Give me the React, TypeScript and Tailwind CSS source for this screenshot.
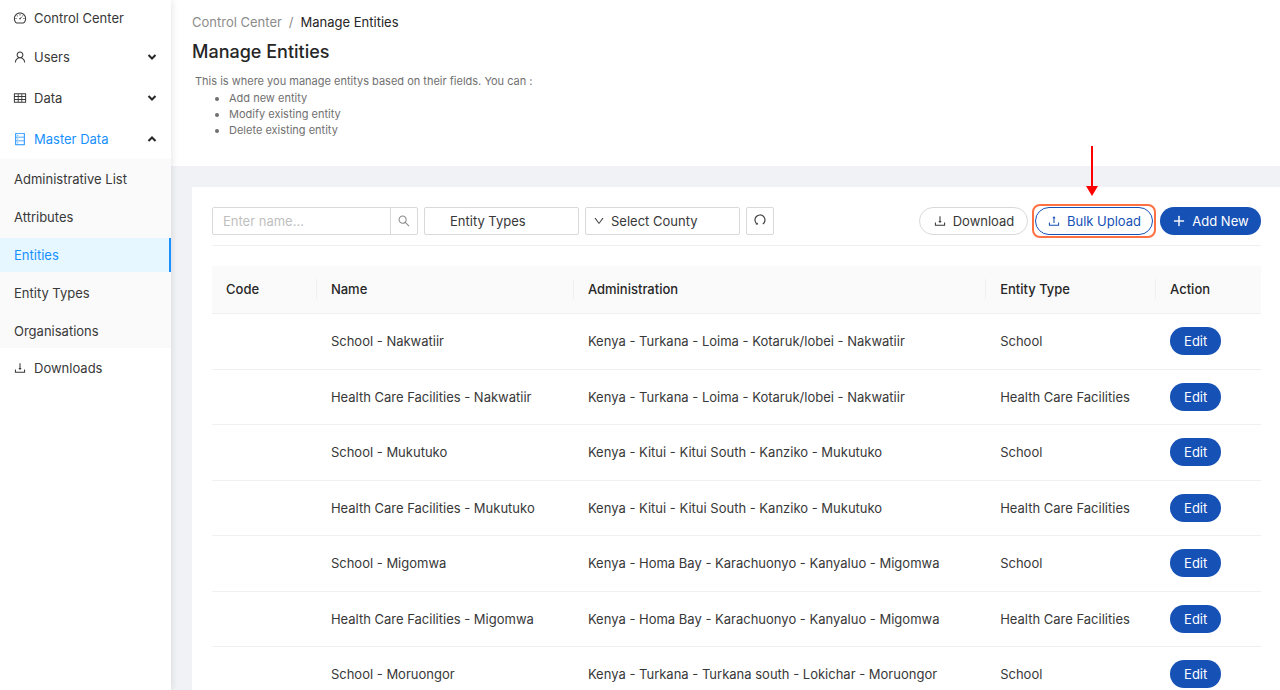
import React from "react";
import {
  AiOutlineDashboard,
  AiOutlineDatabase,
  AiOutlineDown,
  AiOutlineDownload,
  AiOutlinePlus,
  AiOutlineSearch,
  AiOutlineTable,
  AiOutlineUpload,
  AiOutlineUser,
} from "react-icons/ai";

const subItems = [
  "Administrative List",
  "Attributes",
  "Entities",
  "Entity Types",
  "Organisations",
];

const rows = [
  { name: "School - Nakwatiir", administration: "Kenya - Turkana - Loima - Kotaruk/lobei - Nakwatiir", type: "School" },
  { name: "Health Care Facilities - Nakwatiir", administration: "Kenya - Turkana - Loima - Kotaruk/lobei - Nakwatiir", type: "Health Care Facilities" },
  { name: "School - Mukutuko", administration: "Kenya - Kitui - Kitui South - Kanziko - Mukutuko", type: "School" },
  { name: "Health Care Facilities - Mukutuko", administration: "Kenya - Kitui - Kitui South - Kanziko - Mukutuko", type: "Health Care Facilities" },
  { name: "School - Migomwa", administration: "Kenya - Homa Bay - Karachuonyo - Kanyaluo - Migomwa", type: "School" },
  { name: "Health Care Facilities - Migomwa", administration: "Kenya - Homa Bay - Karachuonyo - Kanyaluo - Migomwa", type: "Health Care Facilities" },
  { name: "School - Moruongor", administration: "Kenya - Turkana - Turkana south - Lokichar - Moruongor", type: "School" },
];

const columns = ["Code", "Name", "Administration", "Entity Type", "Action"];

const Chevron = ({ up = false }: { up?: boolean }) => (
  <svg
    viewBox="0 0 10 10"
    className="ml-auto h-[10px] w-[10px] fill-none stroke-[#262626] stroke-2"
  >
    <path d={up ? "M1.5 7 5 3.5 8.5 7" : "M1.5 3 5 6.5 8.5 3"} />
  </svg>
);

type ParentItemProps = {
  icon: React.ReactNode;
  label: string;
  open?: boolean;
};

const ParentItem = ({ icon, label, open = false }: ParentItemProps) => (
  <button
    type="button"
    aria-expanded={open}
    className={`flex h-[41px] w-full items-center gap-[7px] pl-[13px] pr-3.5 ${open ? "text-[#1890ff]" : ""}`}
  >
    {icon}
    {label}
    <Chevron up={open} />
  </button>
);

const Sidebar = () => (
  <nav className="z-10 w-[171px] shrink-0 bg-white shadow-[0_0_8px_rgba(0,0,0,0.12)]">
    <a href="#control-center" className="flex h-9 items-center gap-[7px] pl-[13px]">
      <AiOutlineDashboard className="h-3.5 w-3.5" />
      Control Center
    </a>
    <ParentItem icon={<AiOutlineUser className="h-3.5 w-3.5" />} label="Users" />
    <ParentItem icon={<AiOutlineTable className="h-3.5 w-3.5" />} label="Data" />
    <ParentItem icon={<AiOutlineDatabase className="h-3.5 w-3.5" />} label="Master Data" open />
    <ul className="flex flex-col gap-1 bg-[#fafafa] pt-[3px]">
      {subItems.map((item) => (
        <li key={item}>
          <a
            href="#master-data"
            className={`flex h-[34px] items-center pl-3.5 ${
              item === "Entities"
                ? "border-r-2 border-[#1890ff] bg-[#e6f7ff] text-[#1890ff]"
                : ""
            }`}
          >
            {item}
          </a>
        </li>
      ))}
    </ul>
    <a href="#downloads" className="flex h-10 items-center gap-[7px] pl-[13px]">
      <AiOutlineDownload className="h-3.5 w-3.5" />
      Downloads
    </a>
  </nav>
);

const Header = () => (
  <header className="bg-white pb-7 pl-[21px] pt-3">
    <div className="flex gap-[7px] leading-5 text-[#8c8c8c]">
      <a href="#control-center">Control Center</a>
      <span>/</span>
      <span className="text-[#262626]">Manage Entities</span>
    </div>
    <h1 className="mt-2 text-lg font-medium leading-6 text-[#262626]">Manage Entities</h1>
    <div className="mt-[9px] pl-[3px] text-[11px] leading-4 text-[#707070]">
      <p>This is where you manage entitys based on their fields. You can :</p>
      <ul className="list-disc pl-[34px] pt-px">
        <li>Add new entity</li>
        <li>Modify existing entity</li>
        <li>Delete existing entity</li>
      </ul>
    </div>
  </header>
);

const Toolbar = () => (
  <div className="flex justify-between border-b border-[#f0f0f0] pb-2.5">
    <div className="flex gap-[6px]">
      <div className="flex">
        <input
          type="text"
          aria-label="Enter name"
          placeholder="Enter name..."
          className="h-7 w-[179px] rounded-l-xs border border-[#d9d9d9] px-2.5 placeholder:text-[#bfbfbf]"
        />
        <button
          type="button"
          aria-label="Search"
          className="-ml-px flex h-7 w-7 items-center justify-center rounded-r-xs border border-[#d9d9d9] text-[#8c8c8c]"
        >
          <AiOutlineSearch className="h-3.5 w-3.5" />
        </button>
      </div>
      <select
        aria-label="Entity Types"
        className="h-7 w-[155px] appearance-none rounded-xs border border-[#d9d9d9] bg-white pl-[25px]"
      >
        <option>Entity Types</option>
      </select>
      <div className="relative">
        <AiOutlineDown className="pointer-events-none absolute left-2 top-2 h-3 w-3" />
        <select
          aria-label="Select County"
          className="h-7 w-[155px] appearance-none rounded-xs border border-[#d9d9d9] pl-[25px]"
        >
          <option>Select County</option>
        </select>
      </div>
      <button
        type="button"
        aria-label="Reset filters"
        className="flex h-7 w-7 items-center justify-center rounded-xs border border-[#d9d9d9]"
      >
        <svg viewBox="0 0 14 14" className="h-3.5 w-3.5 fill-none stroke-[#404040] stroke-[1.2]">
          <path d="M4.3 10.2A5 5 0 1 1 9.8 10.1" />
          <path d="M2.6 10.4H4.8V8.6Z" className="fill-[#404040] stroke-none" />
        </svg>
      </button>
    </div>

    <div className="flex gap-[7px]">
      <button
        type="button"
        className="flex h-7 w-[109px] items-center justify-center gap-1.5 rounded-full border border-[#d9d9d9]"
      >
        <AiOutlineDownload className="h-3.5 w-3.5" />
        Download
      </button>
      <div className="relative">
        <button
          type="button"
          className="flex h-7 w-[118px] items-center justify-center gap-1.5 rounded-full border border-[#1651b6] text-[#1651b6]"
        >
          <AiOutlineUpload className="h-3.5 w-3.5" />
          Bulk Upload
        </button>
        {/* highlight around the button and the arrow that points at it */}
        <span className="pointer-events-none absolute -inset-[3px] rounded-lg border-2 border-[#ff7043]" />
        <svg
          viewBox="0 0 12 50"
          className="pointer-events-none absolute -top-[61px] left-[51px] h-[50px] w-3 fill-[#ff0000]"
        >
          <path d="M5 0H7V40H12L6 50L0 40H5Z" />
        </svg>
      </div>
      <button
        type="button"
        className="flex h-7 w-[101px] items-center justify-center gap-1.5 rounded-full bg-[#1651b6] text-white"
      >
        <AiOutlinePlus className="h-3.5 w-3.5 stroke-[30]" />
        Add New
      </button>
    </div>
  </div>
);

const EntityTable = () => (
  <table className="mt-5 w-full table-fixed text-left">
    <colgroup>
      <col className="w-[10%]" />
      <col className="w-[24.5%]" />
      <col className="w-[39.3%]" />
      <col className="w-[16.2%]" />
      <col className="w-[10%]" />
    </colgroup>
    <thead>
      <tr className="h-[47px] border-b border-[#f0f0f0] bg-[#fafafa] text-[#262626]">
        {columns.map((column, i) => (
          <th key={column} className="font-medium">
            <div
              className={`flex h-5 items-center px-3.5 ${
                i < columns.length - 1 ? "border-r border-[#f0f0f0]" : ""
              }`}
            >
              {column}
            </div>
          </th>
        ))}
      </tr>
    </thead>
    <tbody>
      {rows.map((row) => (
        <tr key={row.name} className="h-[55px] border-b border-[#f0f0f0] odd:h-[56px]">
          <td className="px-3.5" />
          <td className="px-3.5">{row.name}</td>
          <td className="px-3.5">{row.administration}</td>
          <td className="px-3.5">{row.type}</td>
          <td className="px-3.5">
            <button type="button" className="block h-7 rounded-full bg-[#1651b6] px-3.5 text-white">
              Edit
            </button>
          </td>
        </tr>
      ))}
    </tbody>
  </table>
);

const App = () => {
  return (
    <div className="flex h-screen overflow-hidden bg-[#f0f2f5] font-['Inter',sans-serif] text-[13px] leading-5 text-[#383838]">
      <Sidebar />
      <main className="min-w-0 flex-1 overflow-y-auto [scrollbar-width:none]">
        <Header />
        <section className="ml-[21px] mt-[21px] bg-white p-5 pr-[19px]">
          <Toolbar />
          <EntityTable />
        </section>
      </main>
    </div>
  );
};

export default App;
